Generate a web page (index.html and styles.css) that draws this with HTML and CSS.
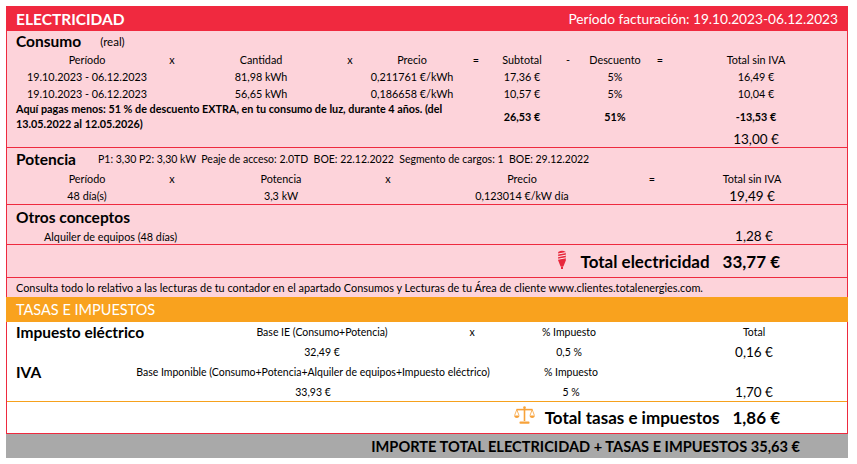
FILE: index.html
```html
<!DOCTYPE html>
<html lang="es">
<head>
<meta charset="utf-8">
<title>Electricidad</title>
<link rel="stylesheet" href="styles.css">
</head>
<body>
<div class="invoice">
  <div class="bar-red">
    <span class="bar-title">ELECTRICIDAD</span>
    <span class="bar-period">Período facturación: 19.10.2023-06.12.2023</span>
  </div>
  <div class="pink">
    <section class="sec sec-cons">
      <div class="sec-title t-cons"><span class="h">Consumo</span><span class="sub">(real)</span></div>
      <div class="row g-cons r-17">
        <span>Período</span><span>x</span><span>Cantidad</span><span>x</span><span>Precio</span><span>=</span><span>Subtotal</span><span>-</span><span>Descuento</span><span>=</span><span>Total sin IVA</span>
      </div>
      <div class="row g-cons r-17">
        <span>19.10.2023 - 06.12.2023</span><span></span><span>81,98 kWh</span><span></span><span>0,211761 €/kWh</span><span></span><span>17,36 €</span><span></span><span>5%</span><span></span><span>16,49 €</span>
      </div>
      <div class="row g-cons r-16">
        <span>19.10.2023 - 06.12.2023</span><span></span><span>56,65 kWh</span><span></span><span>0,186658 €/kWh</span><span></span><span>10,57 €</span><span></span><span>5%</span><span></span><span>10,04 €</span>
      </div>
      <div class="row g-cons r-note">
        <span class="note">Aquí pagas menos: 51 % de descuento EXTRA, en tu consumo de luz, durante 4 años. (del<br>13.05.2022 al 12.05.2026)</span>
        <span class="b c7">26,53 €</span><span class="b c9">51%</span><span class="b c11">-13,53 €</span>
      </div>
      <div class="row g-cons r-16">
        <span class="big c11">13,00 €</span>
      </div>
    </section>
    <section class="sec sec-pot">
      <div class="sec-title t-pot"><span class="h">Potencia</span><span class="info">P1: 3,30 P2: 3,30 kW  Peaje de acceso: 2.0TD  BOE: 22.12.2022  Segmento de cargos: 1  BOE: 29.12.2022</span></div>
      <div class="row g-pot r-17">
        <span>Período</span><span>x</span><span>Potencia</span><span>x</span><span></span><span>Precio</span><span></span><span>=</span><span>Total sin IVA</span>
      </div>
      <div class="row g-pot r-17">
        <span>48 día(s)</span><span></span><span>3,3 kW</span><span></span><span></span><span>0,123014 €/kW día</span><span></span><span></span><span class="big">19,49 €</span>
      </div>
    </section>
    <section class="sec sec-otros">
      <div class="sec-title t-otros"><span class="h">Otros conceptos</span></div>
      <div class="row g-otros r-16">
        <span class="item">Alquiler de equipos (48 días)</span><span class="big">1,28 €</span>
      </div>
    </section>
    <section class="sec total-row">
      <svg class="bulb" width="10" height="20" viewBox="0 0 10 20" aria-hidden="true">
        <path d="M1.2 2 Q5 -0.4 8.8 2 L8.8 10.5 L6.4 16.5 L3.6 16.5 L1.2 10.5 Z" fill="#e8283c"/>
        <path d="M1.2 4 L8.8 2.6 M1.2 6.6 L8.8 5.2 M1.2 9.2 L8.8 7.8" stroke="#fff" stroke-width="0.9" fill="none"/>
        <rect x="4" y="16.5" width="2" height="2.5" fill="#e8283c"/>
      </svg>
      <span class="total-label">Total electricidad</span>
      <span class="total-value">33,77 €</span>
    </section>
    <div class="consulta">Consulta todo lo relativo a las lecturas de tu contador en el apartado Consumos y Lecturas de tu Área de cliente www.clientes.totalenergies.com.</div>
  </div>
  <div class="bar-orange">TASAS E IMPUESTOS</div>
  <div class="tax">
    <div class="tax-body">
      <div class="row g-tax1 r-20">
        <span class="tlabel">Impuesto eléctrico</span><span class="sm">Base IE (Consumo+Potencia)</span><span class="sm">x</span><span class="sm">% Impuesto</span><span></span><span class="sm">Total</span>
      </div>
      <div class="row g-tax1 r-19">
        <span></span><span class="sm">32,49 €</span><span></span><span class="sm">0,5 %</span><span></span><span class="big">0,16 €</span>
      </div>
      <div class="row g-tax2 r-21">
        <span class="tlabel">IVA</span><span class="sm">Base Imponible (Consumo+Potencia+Alquiler de equipos+Impuesto eléctrico)</span><span class="sm">% Impuesto</span><span></span><span></span>
      </div>
      <div class="row g-tax2 r-19">
        <span></span><span class="sm">33,93 €</span><span class="sm">5 %</span><span></span><span class="big">1,70 €</span>
      </div>
    </div>
    <div class="total-row tax-total">
      <svg class="scale" width="21" height="19" viewBox="0 0 21 19" aria-hidden="true">
        <g fill="#f7a23a" stroke="#f7a23a">
          <circle cx="10.5" cy="1.6" r="1.3" stroke="none"/>
          <rect x="9.7" y="2" width="1.6" height="13" stroke="none"/>
          <path d="M2.5 3.6 L18.5 3.6" stroke-width="1.6" fill="none"/>
          <path d="M2.8 3.6 L0.6 9.4 M2.8 3.6 L5 9.4 M18.2 3.6 L16 9.4 M18.2 3.6 L20.4 9.4" stroke-width="0.8" fill="none"/>
          <path d="M0.2 9.6 H5.4 A2.6 2.4 0 0 1 0.2 9.6 Z" stroke="none"/>
          <path d="M15.6 9.6 H20.8 A2.6 2.4 0 0 1 15.6 9.6 Z" stroke="none"/>
          <rect x="5.5" y="15.6" width="10" height="2.2" rx="0.8" stroke="none"/>
        </g>
      </svg>
      <span class="total-label">Total tasas e impuestos</span>
      <span class="total-value">1,86 €</span>
    </div>
  </div>
  <div class="bar-gray">IMPORTE TOTAL ELECTRICIDAD + TASAS E IMPUESTOS 35,63 €</div>
</div>
</body>
</html>
```
FILE: styles.css
```css
body {
  margin: 0;
  background: #fff;
  font-family: Lato, "Liberation Sans", sans-serif;
  color: #000;
}
.invoice {
  width: 842px;
  margin: 6px 0 0 6px;
}
.bar-red {
  height: 25px;
  background: #f0293f;
  color: #fff;
  display: flex;
  align-items: center;
  justify-content: space-between;
  padding: 0 10px 0 10px;
  box-sizing: border-box;
}
.bar-title { font-weight: 700; font-size: 15.5px; }
.bar-period { font-size: 13.7px; }
.pink {
  background: #fdd3da;
  border-left: 1px solid #ee2a3f;
  border-right: 1px solid #ee2a3f;
}
.sec { border-bottom: 1px solid #ee2a3f; }
.sec-title {
  display: flex;
  align-items: center;
  padding-left: 9px;
  white-space: pre;
}
.t-cons { height: 20px; }
.t-pot { height: 22px; }
.t-otros { height: 23px; }
.h { font-weight: 700; font-size: 15.5px; }
.sub { font-size: 11.5px; margin-left: 19px; }
.info { font-size: 10.5px; margin-left: 22px; }
.row {
  display: grid;
  align-items: center;
  font-size: 10.8px;
}
.row > * { text-align: center; white-space: nowrap; }
.r-16 { height: 16px; }
.r-17 { height: 17px; }
.r-19 { height: 19px; }
.r-20 { height: 20px; }
.r-21 { height: 21px; }
.r-note { height: 30px; }
.g-cons { grid-template-columns: 160px 10px 168px 10px 114px 14px 78px 14px 80px 10px 182px; }
.g-pot { grid-template-columns: 160px 10px 208px 6px 81px 100px 75px 10px 190px; }
.g-otros { grid-template-columns: 654px 186px; }
.g-tax1 { grid-template-columns: 193px 244px 56px 138px 23px 186px; }
.g-tax2 { grid-template-columns: 123px 366px 150px 15px 186px; }
.note {
  grid-column: 1 / 6;
  text-align: left !important;
  padding-left: 9px;
  font-weight: 700;
  line-height: 15px;
}
.b { font-weight: 700; }
.c7 { grid-column: 7; }
.c9 { grid-column: 9; }
.c11 { grid-column: 11; }
.big { font-size: 13.5px; }
.item { text-align: left !important; padding-left: 37px; }
.total-row {
  height: 32px;
  display: flex;
  align-items: center;
  justify-content: flex-end;
  padding-right: 67px;
  font-weight: 700;
  font-size: 17px;
}
.bulb { margin-right: 14px; margin-top: -2px; }
.total-value { margin-left: 13px; }
.consulta {
  height: 19px;
  display: flex;
  align-items: center;
  padding-left: 9px;
  font-size: 10.9px;
}
.bar-orange {
  height: 25px;
  background: #f9a21e;
  color: #fff;
  display: flex;
  align-items: center;
  padding-left: 10px;
  font-size: 14.5px;
}
.tax {
  background: #fff;
  border-left: 1px solid #ee2a3f;
  border-right: 1px solid #ee2a3f;
  border-bottom: 1px solid #ee2a3f;
}
.tax-body { border-bottom: 1px solid #f6a11d; }
.tlabel {
  text-align: left !important;
  padding-left: 9px;
  font-weight: 700;
  font-size: 15.5px;
}
.sm { font-size: 10.5px; }
.tax-total { height: 31px; }
.scale { margin-right: 10px; margin-top: -4px; }
.bar-gray {
  height: 24px;
  background: #a9a9a9;
  display: flex;
  align-items: center;
  justify-content: flex-end;
  padding-right: 48px;
  font-weight: 700;
  font-size: 14.6px;
}
```
